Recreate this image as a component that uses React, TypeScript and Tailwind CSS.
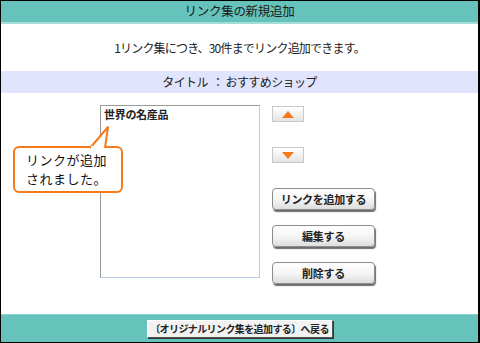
import React from "react";

const font = { fontFamily: '"Noto Sans CJK JP", "Noto Sans", sans-serif' };

function ArrowButton({ up }: { up?: boolean }) {
  return (
    <div className="w-[32px] h-[16px] border border-[#c8c8c8] bg-gradient-to-b from-[#ffffff] to-[#e4e4e4] flex items-center justify-center">
      {up ? (
        <div className="w-0 h-0 border-l-[6px] border-r-[6px] border-b-[7px] border-l-transparent border-r-transparent border-b-[#f47a20]" />
      ) : (
        <div className="w-0 h-0 border-l-[6px] border-r-[6px] border-t-[7px] border-l-transparent border-r-transparent border-t-[#f47a20]" />
      )}
    </div>
  );
}

function BigButton({ label }: { label: string }) {
  return (
    <div className="w-[103px] h-[22px] rounded-[4px] border border-[#8c8c8c] bg-gradient-to-b from-[#ffffff] via-[#f6f6f6] to-[#dedede] shadow-[1px_2px_1px_rgba(60,60,60,0.75)] flex items-center justify-center text-[11px] font-bold text-[#222] tracking-[-0.3px]">
      {label}
    </div>
  );
}

export default function App() {
  return (
    <div
      className="relative w-[480px] h-[343px] border-l border-t border-r-2 border-b border-black bg-white flex flex-col text-[#222]"
      style={font}
    >
      <div className="h-[23px] bg-[#66c3bc] border-b-2 border-[#a4dcd7] flex items-center justify-center text-[12.5px] text-[#1a1a1a] tracking-[-0.3px]">
        リンク集の新規追加
      </div>
      <div className="h-[47px] flex items-center justify-center text-[12px] tracking-[-0.8px]">
        1リンク集につき、30件までリンク追加できます。
      </div>
      <div className="h-[22px] bg-[#e0e4fc] flex items-center justify-center text-[12px] tracking-[-0.6px]">
        タイトル&nbsp;&nbsp;：&nbsp;おすすめショップ
      </div>
      <div className="flex-1 flex pl-[99px] pt-[12px]">
        <div className="w-[160px] h-[173px] border border-t-[#9a9a9a] border-l-[#9a9a9a] border-r-[#b7cde6] border-b-[#b7cde6] bg-white pl-[3px] pt-[1px] text-[11px] leading-[14px] font-bold tracking-[-0.3px]">
          世界の名産品
        </div>
        <div className="ml-[12px] pt-[1px] flex flex-col">
          <ArrowButton up />
          <div className="mt-[25px]">
            <ArrowButton />
          </div>
          <div className="mt-[25px] flex flex-col gap-[15px]">
            <BigButton label="リンクを追加する" />
            <BigButton label="編集する" />
            <BigButton label="削除する" />
          </div>
        </div>
      </div>
      <div className="h-[28px] bg-[#66c3bc] border-t border-[#8fd3ce] flex items-center justify-center">
        <div className="w-[186px] h-[18px] bg-[#f2f2f2] border border-t-white border-l-white border-r-[#555] border-b-[#555] shadow-[1px_1px_0_#333] flex items-center justify-center text-[10px] font-bold tracking-[-0.6px] text-[#222]">
          〔オリジナルリンク集を追加する〕へ戻る
        </div>
      </div>

      <div className="absolute left-[12px] top-[145px] w-[110px] h-[47px] border-2 border-[#f47a1c] rounded-[6px] bg-white pl-[11px] pt-[2px] text-[13px] tracking-[0.5px] text-[#111] flex flex-col">
        <div className="h-[19px] leading-[19px]">リンクが追加</div>
        <div className="h-[19px] leading-[19px]">されました。</div>
        <svg
          className="absolute"
          style={{ left: 73, top: -23 }}
          width="22"
          height="24"
          viewBox="0 0 22 24"
        >
          <path d="M2 23 L20 2 L17 23" fill="white" stroke="#f47a1c" strokeWidth="2" strokeLinejoin="round" />
          <rect x="3" y="21" width="13" height="4" fill="white" />
        </svg>
      </div>
    </div>
  );
}
